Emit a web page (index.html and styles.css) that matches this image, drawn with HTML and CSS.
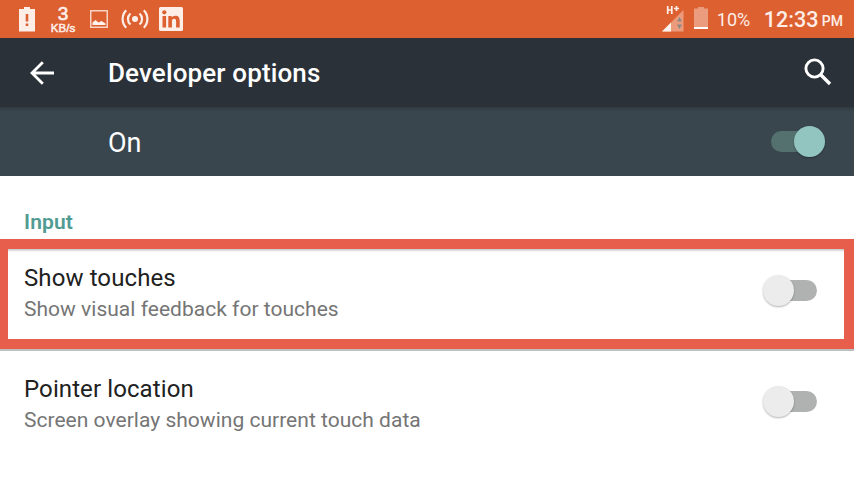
FILE: index.html
```html
<!DOCTYPE html>
<html lang="en">
<head>
  <meta charset="UTF-8" />
  <meta name="viewport" content="width=device-width, initial-scale=1.0"/>
  <title>Developer options</title>
  <link rel="stylesheet" href="styles.css">
</head>
<body>
  <div class="status-bar">
    <div class="notifications">
      <svg class="icon-alert" width="16" height="25" viewBox="0 0 16 25">
        <path fill="#fdeee8" fill-rule="evenodd" d="M5 0h6v2h5v22.500H0V2h5zM6.700 7v7.500h2.600V7zM6.700 16.500V19h2.600v-2.500z"/>
      </svg>
      <div class="speed">
        <span class="speed-value">3</span>
        <span class="speed-unit">KB/s</span>
      </div>
      <svg class="icon-image" width="18" height="18" viewBox="0 0 18 18">
        <rect x=".75" y=".75" width="16.5" height="16.5" fill="none" stroke="#f8d2c3" stroke-width="1.5"/>
        <path fill="#fff3ee" d="M2.500 15v-2.500L5.500 10l3 2.500 3-1.500 4 2.500V15z"/>
      </svg>
      <svg class="icon-cast" width="28" height="20" viewBox="0 0 28 20" fill="none" stroke="#fdeee8" stroke-width="2.200">
        <circle cx="14" cy="10" r="3" fill="#fdeee8" stroke="none"/>
        <path d="M9.500 4.500a7.200 7.200 0 0 0 0 11M18.500 4.500a7.200 7.200 0 0 1 0 11M5.200 1.200a12.600 12.600 0 0 0 0 17.600M22.800 1.200a12.600 12.600 0 0 1 0 17.600"/>
      </svg>
      <svg class="icon-linkedin" width="24" height="24" viewBox="0 0 24 24">
        <rect width="24" height="24" rx="1.5" fill="#fdeee8"/>
        <g fill="#dd6031">
          <circle cx="5.300" cy="5.300" r="2.100"/>
          <path d="M3.500 9h3.600v11.500H3.500zM9.300 9h3.400v1.600c.7-1.200 2-1.900 3.700-1.900 3.200 0 4.300 2 4.300 5v6.800h-3.600v-6.200c0-1.600-.5-2.600-1.900-2.600-1.600 0-2.300 1.100-2.300 2.700v6.100H9.300z"/>
        </g>
      </svg>
    </div>
    <div class="system">
      <svg class="icon-signal" width="22" height="26" viewBox="0 0 22 26">
        <path fill="#eb9b7c" d="M21.500 4v21.500H0z"/>
        <path fill="#fff3ee" d="M9 16.500v9H0z"/>
        <path fill="#8b8783" d="M17.500 11l2.500 4.500h-5zM17.500 23l2.500-4.500h-5z"/>
        <path stroke="#fdeee8" stroke-width="1.700" fill="none" d="M5.700 0v8M9.800 0v8M5.700 4h4.100M14.500 0v5M12 2.500h5"/>
      </svg>
      <svg class="icon-battery" width="14" height="22" viewBox="0 0 14 22">
        <path fill="#eb9c7e" d="M4 0h6v1.500h4V20H0V1.500h4z"/>
        <rect y="20" width="14" height="2" fill="#fff"/>
      </svg>
      <span class="percent">10%</span>
      <span class="clock">12:33</span>
      <span class="meridiem">PM</span>
    </div>
  </div>

  <header class="toolbar">
    <svg class="icon-back" width="24" height="24" viewBox="0 0 24 24" fill="none" stroke="#fff" stroke-width="2.800">
      <path d="M24 12H2M12.800 1.200L2 12l10.800 10.800"/>
    </svg>
    <h1>Developer options</h1>
    <svg class="icon-search" width="28" height="28" viewBox="0 0 28 28" fill="none" stroke="#fff">
      <circle cx="10.500" cy="10.500" r="8.600" stroke-width="2.900"/>
      <path d="M17 17l9 9" stroke-width="3.400"/>
    </svg>
  </header>

  <div class="switch-bar">
    <span class="switch-label">On</span>
    <div class="switch on"><div class="thumb"></div></div>
  </div>

  <main>
    <h2>Input</h2>
    <div class="option highlighted">
      <div class="option-text">
        <div class="option-title">Show touches</div>
        <div class="option-summary">Show visual feedback for touches</div>
      </div>
      <div class="switch"><div class="thumb"></div></div>
    </div>
    <div class="option">
      <div class="option-text">
        <div class="option-title">Pointer location</div>
        <div class="option-summary">Screen overlay showing current touch data</div>
      </div>
      <div class="switch"><div class="thumb"></div></div>
    </div>
  </main>
</body>
</html>
```

FILE: styles.css
```css
* {
  box-sizing: border-box;
  margin: 0;
  padding: 0;
}

body {
  background: #fff;
  font-family: Roboto, sans-serif;
  height: 480px;
  overflow: hidden;
}

svg {
  display: block;
  flex: none;
}

.status-bar {
  display: flex;
  justify-content: space-between;
  height: 38px;
  background: #dd6031;
  color: #fdeee8;
  padding: 0 11px 0 19px;
}

.notifications,
.system {
  display: flex;
  align-items: flex-start;
}

.icon-alert {
  margin-top: 7px;
}

.speed {
  display: flex;
  flex-direction: column;
  align-items: center;
  width: 28px;
  margin-left: 14px;
  padding-top: 5px;
  font-family: "Liberation Sans", sans-serif;
}

.speed-value {
  font-size: 19px;
  line-height: 18px;
  -webkit-text-stroke: 0.6px;
}

.speed-unit {
  font-size: 11.5px;
  line-height: 10px;
  -webkit-text-stroke: 0.5px;
}

.icon-image {
  margin: 10px 0 0 13px;
}

.icon-cast {
  margin: 9px 0 0 13px;
}

.icon-linkedin {
  margin: 7px 0 0 10px;
}

.icon-signal {
  margin: 6px 10px 0 0;
}

.icon-battery {
  margin: 7px 9px 0 0;
}

.percent {
  width: 47px;
  font-size: 18px;
  line-height: 40px;
}

.clock {
  width: 58px;
  font-size: 21.5px;
  font-weight: 500;
  line-height: 40px;
}

.meridiem {
  font-size: 14px;
  font-weight: 500;
  line-height: 43px;
}

.toolbar {
  display: flex;
  align-items: center;
  height: 69px;
  padding: 0 22px 0 30px;
  background: #2a3138;
  color: #fff;
}

.toolbar h1 {
  flex: 1;
  margin-left: 54px;
  font-size: 26px;
  font-weight: 500;
  letter-spacing: 0.13px;
}

.icon-search {
  margin-bottom: 2px;
}

.switch-bar {
  display: flex;
  align-items: center;
  justify-content: space-between;
  height: 69px;
  padding: 0 29px 0 108px;
  background: linear-gradient(#303a41, #39464d 5px);
  color: #fff;
}

.switch-label {
  padding-top: 2px;
  font-size: 27px;
}

.switch {
  display: flex;
  align-items: center;
  width: 54px;
  height: 21px;
  background: linear-gradient(#b0b2b1, #b0b2b1) right / 40px 21px no-repeat;
  border-radius: 11px;
}

.switch .thumb {
  width: 31px;
  height: 31px;
  flex: none;
  border-radius: 50%;
  background: #ececec;
  box-shadow: 0 1px 2px rgba(0, 0, 0, 0.3);
}

.switch.on {
  justify-content: flex-end;
  background: #54716f;
}

.switch.on .thumb {
  background: #92c5c0;
}

main h2 {
  height: 63px;
  padding: 31px 24px 0;
  color: #519b92;
  font-size: 21px;
  font-weight: 600;
  letter-spacing: 0.1px;
  line-height: 30px;
}

.option {
  display: flex;
  align-items: center;
  justify-content: space-between;
  height: 112px;
  padding: 0 37px 8px 24px;
}

.option-text {
  padding-top: 6px;
}

.option.highlighted {
  height: 110px;
  border: 10px solid #e85e4c;
  border-left-width: 8px;
  padding: 0 27px 8px 16px;
  background: linear-gradient(#c4c4c4, #fff 3px);
  box-shadow: 0 2px 0 #bfc1c1;
}

.option-title {
  color: #212121;
  font-size: 24px;
  letter-spacing: 0.1px;
  line-height: 32px;
}

.option-summary {
  color: #757575;
  font-size: 21px;
  letter-spacing: 0.02px;
  line-height: 30px;
}
```
